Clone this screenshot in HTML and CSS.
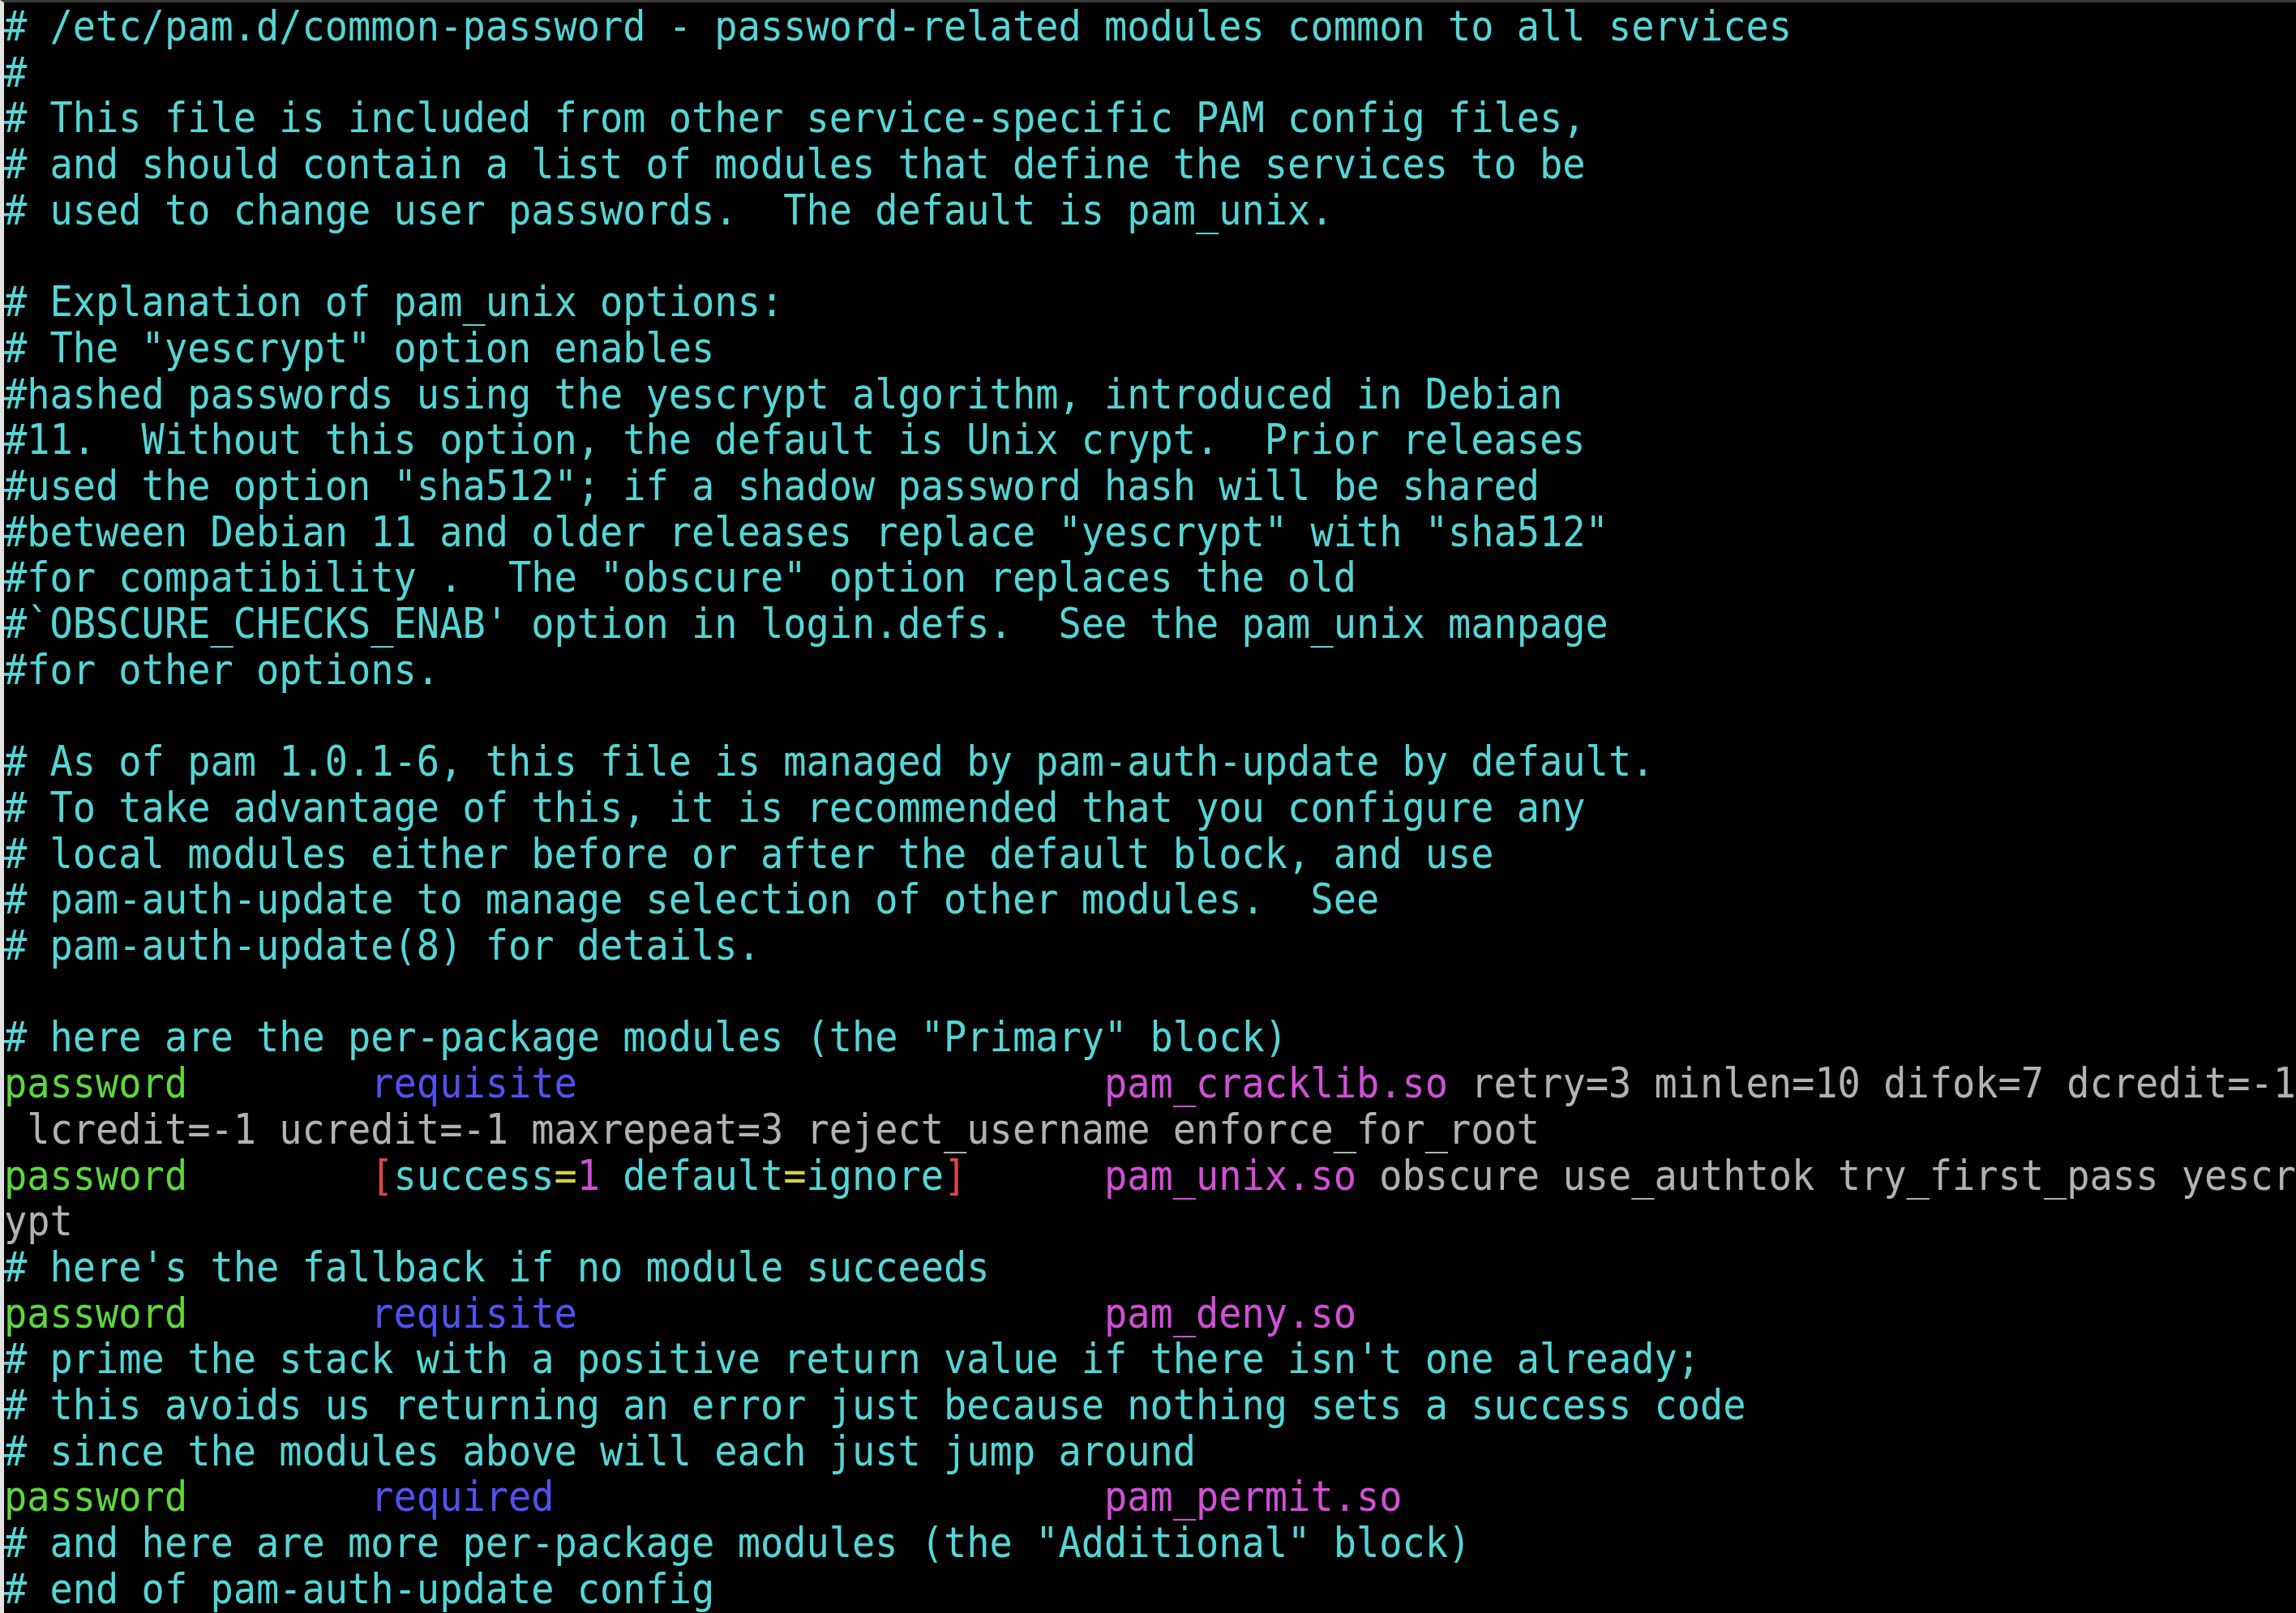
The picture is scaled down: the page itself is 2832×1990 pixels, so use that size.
FILE: index.html
```html
<!DOCTYPE html>
<html lang="en">
<head>
<meta charset="utf-8">
<title>common-password</title>
<link rel="stylesheet" href="styles.css">
</head>
<body>
<div class="screen">
<div class="term">
<div class="ln c"># /etc/pam.d/common-password - password-related modules common to all services</div>
<div class="ln c">#</div>
<div class="ln c"># This file is included from other service-specific PAM config files,</div>
<div class="ln c"># and should contain a list of modules that define the services to be</div>
<div class="ln c"># used to change user passwords.  The default is pam_unix.</div>
<div class="ln"></div>
<div class="ln c"># Explanation of pam_unix options:</div>
<div class="ln c"># The "yescrypt" option enables</div>
<div class="ln c">#hashed passwords using the yescrypt algorithm, introduced in Debian</div>
<div class="ln c">#11.  Without this option, the default is Unix crypt.  Prior releases</div>
<div class="ln c">#used the option "sha512"; if a shadow password hash will be shared</div>
<div class="ln c">#between Debian 11 and older releases replace "yescrypt" with "sha512"</div>
<div class="ln c">#for compatibility .  The "obscure" option replaces the old</div>
<div class="ln c">#`OBSCURE_CHECKS_ENAB' option in login.defs.  See the pam_unix manpage</div>
<div class="ln c">#for other options.</div>
<div class="ln"></div>
<div class="ln c"># As of pam 1.0.1-6, this file is managed by pam-auth-update by default.</div>
<div class="ln c"># To take advantage of this, it is recommended that you configure any</div>
<div class="ln c"># local modules either before or after the default block, and use</div>
<div class="ln c"># pam-auth-update to manage selection of other modules.  See</div>
<div class="ln c"># pam-auth-update(8) for details.</div>
<div class="ln"></div>
<div class="ln c"># here are the per-package modules (the "Primary" block)</div>
<div class="ln"><span class="g">password</span>        <span class="b">requisite</span>                       <span class="m">pam_cracklib.so</span> retry=3 minlen=10 difok=7 dcredit=-1</div>
<div class="ln"> lcredit=-1 ucredit=-1 maxrepeat=3 reject_username enforce_for_root</div>
<div class="ln"><span class="g">password</span>        <span class="r">[</span><span class="c">success</span><span class="y">=</span><span class="m">1</span><span class="c"> default</span><span class="y">=</span><span class="c">ignore</span><span class="r">]</span>      <span class="m">pam_unix.so</span> obscure use_authtok try_first_pass yescr</div>
<div class="ln">ypt</div>
<div class="ln c"># here's the fallback if no module succeeds</div>
<div class="ln"><span class="g">password</span>        <span class="b">requisite</span>                       <span class="m">pam_deny.so</span></div>
<div class="ln c"># prime the stack with a positive return value if there isn't one already;</div>
<div class="ln c"># this avoids us returning an error just because nothing sets a success code</div>
<div class="ln c"># since the modules above will each just jump around</div>
<div class="ln"><span class="g">password</span>        <span class="b">required</span>                        <span class="m">pam_permit.so</span></div>
<div class="ln c"># and here are more per-package modules (the "Additional" block)</div>
<div class="ln c"># end of pam-auth-update config</div>
</div>
</div>
</body>
</html>
```
FILE: styles.css
```css
html, body {
  margin: 0;
  padding: 0;
  background: #000;
}

.screen {
  width: 2832px;
  height: 1990px;
  box-sizing: border-box;
  border-top: 3px solid #3b3b3b;
  border-left: 5px solid #e2e2e2;
  background: #000;
  overflow: hidden;
}

.term {
  width: max-content;
  padding-top: 1px;
  font-family: "DejaVu Sans Mono", "Liberation Mono", monospace;
  font-size: 52px;
  line-height: 56.7px;
  color: #b2b2b2;
  transform: scaleX(0.903);
  transform-origin: 0 0;
}

.ln {
  white-space: pre;
  min-height: 56.7px;
}

.c { color: #55d6d6; }
.g { color: #5cd83e; }
.b { color: #5252f0; }
.m { color: #d24fd8; }
.r { color: #e04646; }
.y { color: #d6d040; }
```
